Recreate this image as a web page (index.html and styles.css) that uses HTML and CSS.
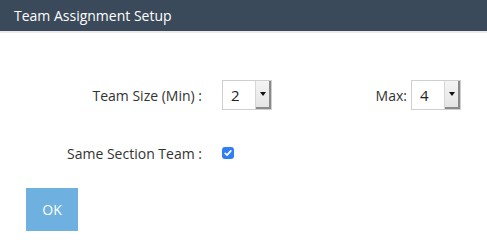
FILE: index.html
```html
<!DOCTYPE html>
<html>
<head>
<meta charset="utf-8">
<link rel="stylesheet" href="styles.css">
</head>
<body>
<div class="dialog">
  <div class="header">Team Assignment Setup</div>
  <div class="content">
    <div class="row row-size">
      <div class="label">Team Size (Min) :</div>
      <div class="select">
        <span class="value">2</span>
        <span class="arrow"><span class="tri"></span></span>
      </div>
      <div class="max-group">
        <span class="max-label">Max:</span>
        <div class="select">
          <span class="value">4</span>
          <span class="arrow"><span class="tri"></span></span>
        </div>
      </div>
    </div>
    <div class="row row-section">
      <div class="label">Same Section Team :</div>
      <span class="checkbox">
        <svg width="12" height="12" viewBox="0 0 12 12"><path d="M3.2 6.3 L5.1 8.1 L8.8 3.9" fill="none" stroke="#fff" stroke-width="1.7" stroke-linecap="round" stroke-linejoin="round"/></svg>
      </span>
    </div>
    <div class="actions">
      <button class="ok">OK</button>
    </div>
  </div>
</div>
</body>
</html>
```
FILE: styles.css
```css
html, body {
  margin: 0;
  padding: 0;
  background: #ffffff;
}
body {
  font-family: "Open Sans", "Noto Sans", sans-serif;
  color: #333333;
  width: 487px;
  height: 245px;
  overflow: hidden;
}
.header {
  height: 31px;
  background: #3b4a5a;
  color: #ffffff;
  font-size: 14px;
  line-height: 31px;
  padding-left: 14px;
  border-bottom: 2px solid #eaeaea;
}
.content {
  padding-top: 47px;
}
.row {
  display: flex;
  align-items: center;
}
.label {
  text-align: right;
  font-size: 14px;
  padding-right: 20px;
  box-sizing: border-box;
  width: 222px;
}
.row-size {
  height: 30px;
}
.row-section {
  margin-top: 36px;
  height: 14px;
}
.select {
  display: flex;
  width: 50px;
  height: 30px;
  box-sizing: border-box;
  border: 1px solid #cfcfcf;
  background: #fff;
}
.select .value {
  flex: 1;
  font-size: 15px;
  line-height: 28px;
  padding-left: 8px;
  color: #222;
}
.select .arrow {
  width: 15px;
  display: flex;
  align-items: center;
  justify-content: center;
  background: linear-gradient(#f4f4f4, #e4e4e4);
  border-left: 1px solid #d6d6d6;
  box-shadow: inset -2px -2px 0 #8a8a8a;
}
.tri {
  width: 0;
  height: 0;
  border-left: 3px solid transparent;
  border-right: 3px solid transparent;
  border-top: 4px solid #111;
  margin-top: -2px;
  margin-right: 1px;
}
.max-group {
  display: flex;
  align-items: center;
  margin-left: auto;
  margin-right: 26px;
}
.max-label {
  font-size: 14px;
  margin-right: 4px;
}
.checkbox {
  width: 12px;
  height: 12px;
  border-radius: 3px;
  background: #2f7ef3;
  display: flex;
}
.actions {
  padding-left: 26px;
  margin-top: 28px;
}
.ok {
  width: 52px;
  height: 43px;
  border: none;
  background: #6eb1e0;
  color: #fff;
  font-family: "Open Sans", "Noto Sans", sans-serif;
  font-size: 14px;
  padding: 0;
}
```
